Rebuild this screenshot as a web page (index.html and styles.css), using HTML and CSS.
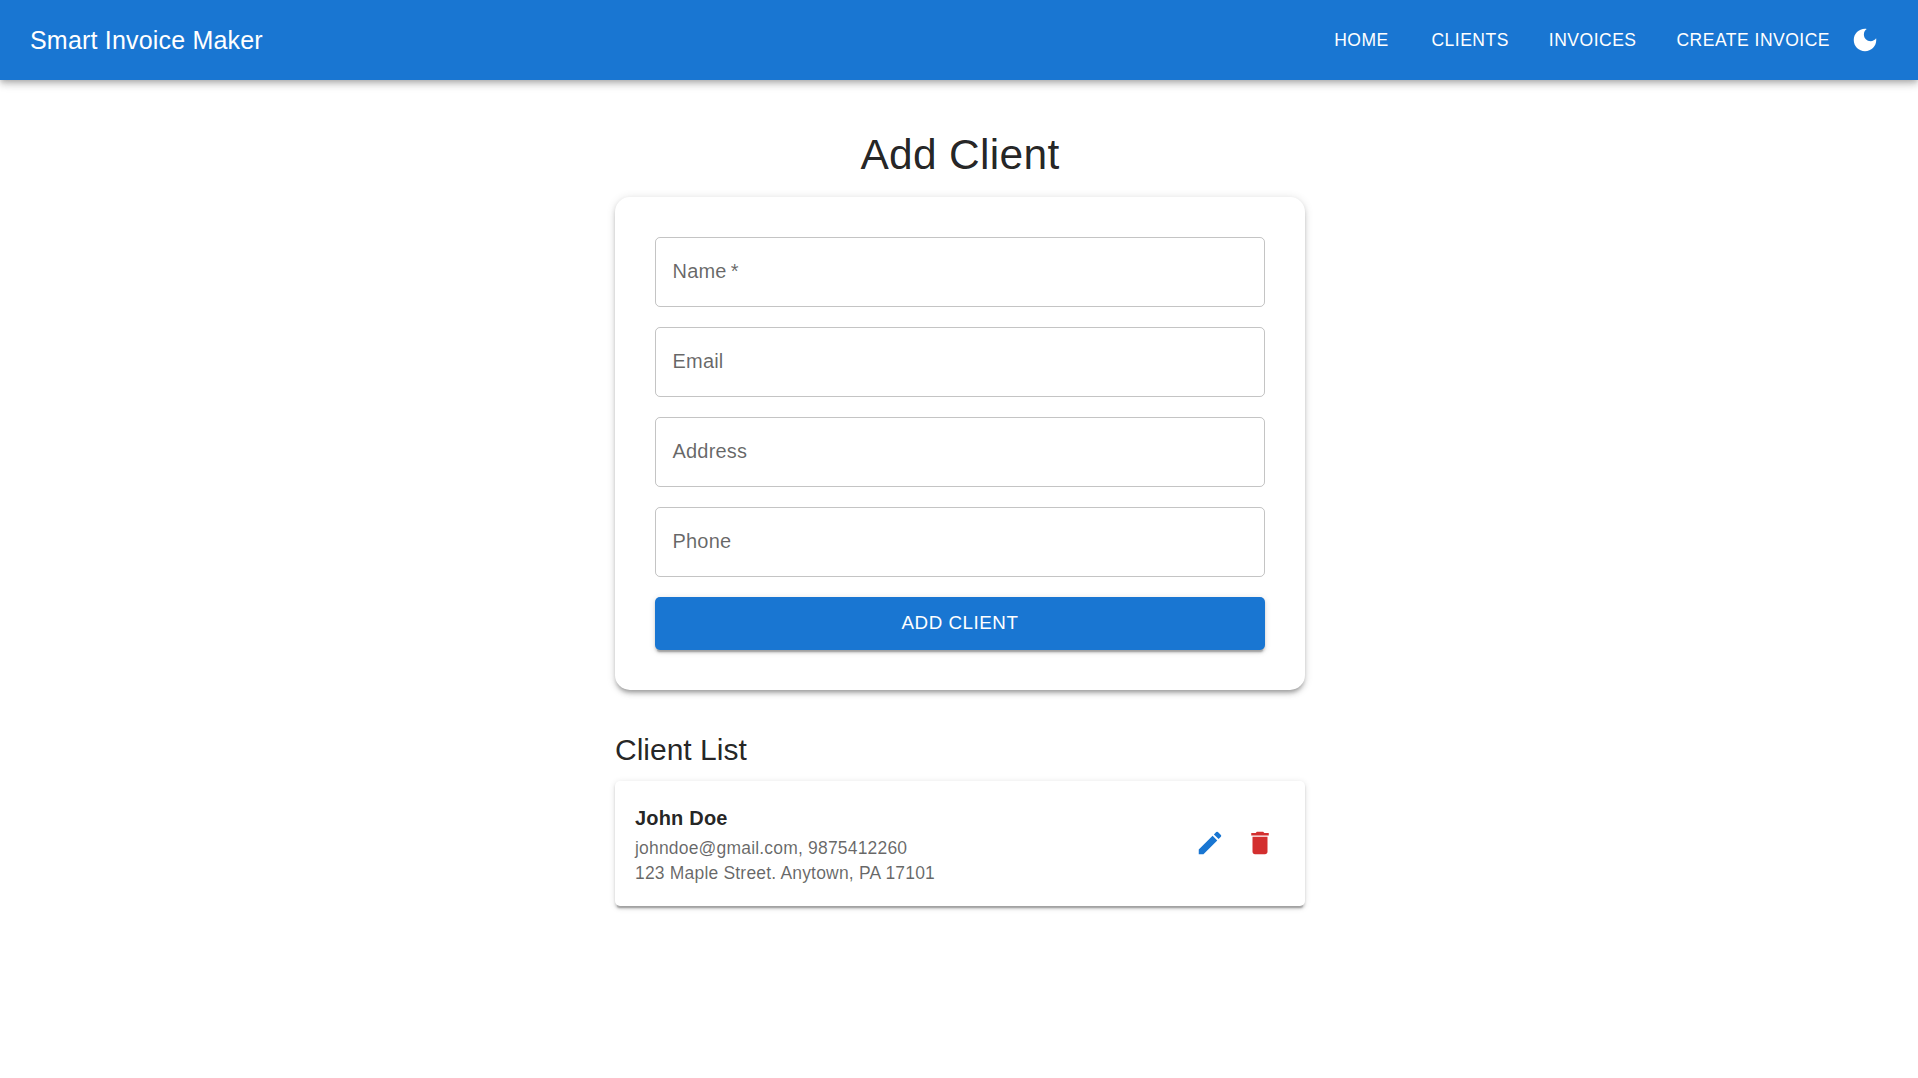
FILE: index.html
```html
<!DOCTYPE html>
<html lang="en">
<head>
<meta charset="utf-8">
<title>Smart Invoice Maker</title>
<link rel="stylesheet" href="styles.css">
</head>
<body>
<header class="app-bar">
  <div class="brand">Smart Invoice Maker</div>
  <nav class="nav">
    <a class="nav-link">Home</a>
    <a class="nav-link">Clients</a>
    <a class="nav-link">Invoices</a>
    <a class="nav-link">Create Invoice</a>
  </nav>
  <button class="icon-button" type="button" aria-label="Toggle dark mode">
    <svg class="icon" viewBox="0 0 24 24"><path d="M12 3c-4.97 0-9 4.03-9 9s4.03 9 9 9 9-4.03 9-9c0-.46-.04-.92-.1-1.36-.98 1.37-2.58 2.26-4.4 2.26-2.98 0-5.4-2.42-5.4-5.4 0-1.81.89-3.42 2.26-4.4-.44-.06-.9-.1-1.36-.1z"/></svg>
  </button>
</header>
<div class="page">
  <main class="container">
    <h1 class="title">Add Client</h1>
    <form class="form-card">
      <label class="field">Name&thinsp;*</label>
      <label class="field">Email</label>
      <label class="field">Address</label>
      <label class="field">Phone</label>
      <button class="submit" type="button">Add Client</button>
    </form>
    <h2 class="subtitle">Client List</h2>
    <section class="client">
      <div class="client-info">
        <div class="client-name">John Doe</div>
        <div class="client-detail">johndoe@gmail.com, 9875412260</div>
        <div class="client-detail">123 Maple Street. Anytown, PA 17101</div>
      </div>
      <button class="icon-button edit" type="button" aria-label="Edit">
        <svg class="icon" viewBox="0 0 24 24"><path d="M3 17.25V21h3.75L17.81 9.94l-3.75-3.75zM20.71 7.04c.39-.39.39-1.02 0-1.41l-2.34-2.34a.9959.9959 0 0 0-1.41 0l-1.83 1.83 3.75 3.75z"/></svg>
      </button>
      <button class="icon-button delete" type="button" aria-label="Delete">
        <svg class="icon" viewBox="0 0 24 24"><path d="M6 19c0 1.1.9 2 2 2h8c1.1 0 2-.9 2-2V7H6zM19 4h-3.5l-1-1h-5l-1 1H5v2h14z"/></svg>
      </button>
    </section>
  </main>
</div>
</body>
</html>
```
FILE: styles.css
```css
* { box-sizing: border-box; }

html { overflow: hidden; }

body {
  min-height: 100vh;
  margin: 0;
  background: #fff;
  color: rgba(0, 0, 0, 0.87);
  font-family: "Liberation Sans", Arial, sans-serif;
}

.page { width: 1920px; padding-top: 49px; }

.app-bar {
  display: flex;
  align-items: center;
  height: 80px;
  padding: 0 28px 0 30px;
  background: #1976d2;
  color: #fff;
  box-shadow: 0 2.5px 5px -1.25px rgba(0, 0, 0, 0.2), 0 5px 6.25px rgba(0, 0, 0, 0.14), 0 1.25px 12.5px rgba(0, 0, 0, 0.12);
}

.brand {
  flex: 1;
  font-size: 25px;
  line-height: 1.6;
  letter-spacing: 0.0075em;
}

.nav { display: flex; gap: 20px; }

.nav-link {
  min-width: 80px;
  padding: 7.5px 10px;
  font-size: 17.5px;
  line-height: 1.75;
  letter-spacing: 0.02857em;
  text-align: center;
  text-transform: uppercase;
}

.icon-button {
  display: flex;
  padding: 10px;
  border: 0;
  background: none;
  color: inherit;
}

.icon { width: 30px; height: 30px; fill: currentColor; }

.container { width: 690px; margin: 0 auto; }

.title {
  margin: 0 0 16px;
  font-size: 42.5px;
  font-weight: 400;
  line-height: 52px;
  letter-spacing: 0.00735em;
  text-align: center;
}

.form-card {
  display: flex;
  flex-direction: column;
  gap: 20px;
  padding: 40px;
  border-radius: 15px;
  box-shadow: 0 3.75px 3.75px -2.5px rgba(0, 0, 0, 0.2), 0 3.75px 5px rgba(0, 0, 0, 0.14), 0 1.25px 10px rgba(0, 0, 0, 0.12);
}

.field {
  height: 70px;
  padding: 19px 16.5px;
  border: 1px solid rgba(0, 0, 0, 0.23);
  border-radius: 5px;
  color: rgba(0, 0, 0, 0.6);
  font-size: 20px;
  line-height: 28px;
  letter-spacing: 0.00938em;
}

.submit {
  padding: 9px 27.5px 11px;
  border: 0;
  border-radius: 5px;
  background: #1976d2;
  color: #fff;
  font: 400 18.75px/33px "Liberation Sans", Arial, sans-serif;
  letter-spacing: 0.02857em;
  text-transform: uppercase;
  box-shadow: 0 3.75px 1.25px -2.5px rgba(0, 0, 0, 0.2), 0 2.5px 2.5px rgba(0, 0, 0, 0.14), 0 1.25px 6.25px rgba(0, 0, 0, 0.12);
}

.subtitle {
  margin: 40px 0 11px;
  font-size: 30px;
  font-weight: 400;
  line-height: 40px;
}

.client {
  display: flex;
  align-items: center;
  padding: 20px;
  border-radius: 5px;
  box-shadow: 0 3.75px 1.25px -2.5px rgba(0, 0, 0, 0.2), 0 2.5px 2.5px rgba(0, 0, 0, 0.14), 0 1.25px 6.25px rgba(0, 0, 0, 0.12);
}

.client-info { flex: 1; }

.client-name {
  margin-bottom: 1px;
  font-size: 20px;
  font-weight: 700;
  line-height: 34px;
  letter-spacing: 0.00938em;
}

.client-detail {
  color: rgba(0, 0, 0, 0.6);
  font-size: 17.5px;
  line-height: 25px;
  letter-spacing: 0.01071em;
}

.edit, .delete { margin-bottom: 1px; }
.edit { color: #1976d2; }
.delete { color: #d32f2f; }
```
